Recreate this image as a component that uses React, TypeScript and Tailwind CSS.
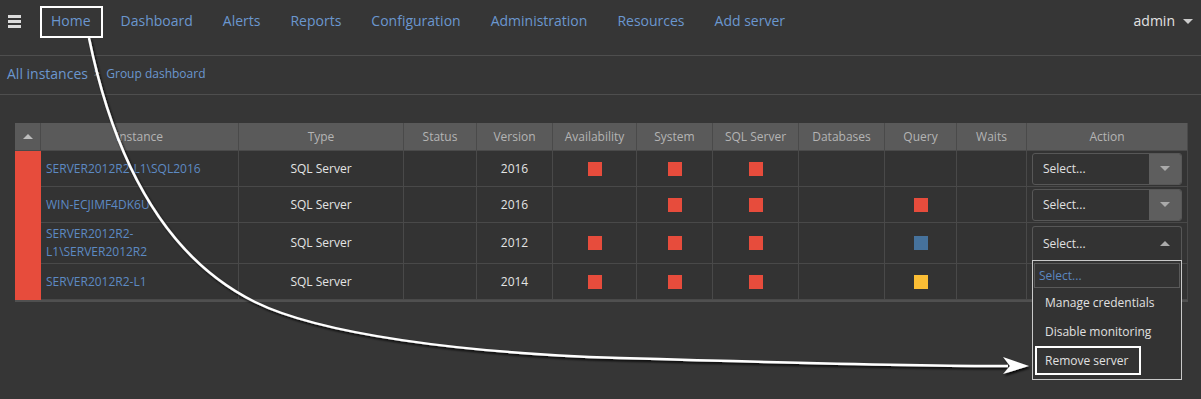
import React from "react";

const navLinks = ["Home", "Dashboard", "Alerts", "Reports", "Configuration", "Administration", "Resources", "Add server"];

const headers = ["Instance", "Type", "Status", "Version", "Availability", "System", "SQL Server", "Databases", "Query", "Waits", "Action"];

type Row = {
  name: React.ReactNode;
  version: string;
  avail: string | null;
  system: string | null;
  sql: string | null;
  query: string | null;
  open?: boolean;
};

const RED = "bg-[#e74c3c]";
const BLUE = "bg-[#46729c]";
const YELLOW = "bg-[#fbbe35]";

const rows: Row[] = [
  { name: "SERVER2012R2-L1\\SQL2016", version: "2016", avail: RED, system: RED, sql: RED, query: null },
  { name: "WIN-ECJIMF4DK6U", version: "2016", avail: null, system: RED, sql: RED, query: RED },
  {
    name: (
      <>
        SERVER2012R2-
        <br />
        L1\SERVER2012R2
      </>
    ),
    version: "2012",
    avail: RED,
    system: RED,
    sql: RED,
    query: BLUE,
    open: true,
  },
  { name: "SERVER2012R2-L1", version: "2014", avail: RED, system: RED, sql: RED, query: YELLOW },
];

const cell = "border-r border-b border-[#494949] bg-[#333333]";

function Square({ c }: { c: string | null }) {
  return (
    <div className={`${cell} flex items-center justify-center`}>
      {c ? <div className={`w-[14px] h-[14px] ${c}`} /> : null}
    </div>
  );
}

function ClosedSelect() {
  return (
    <div className={`${cell} flex items-center px-[5px]`}>
      <div className="flex h-[32px] w-[150px] overflow-hidden rounded-[3px] border border-[#575757] bg-[#333333]">
        <span className="flex flex-1 items-center pl-[10px] text-[12px] text-[#e0e0e0]">Select...</span>
        <span className="flex w-[32px] items-center justify-center bg-[#5e5e5e]">
          <span className="h-0 w-0 border-l-[5px] border-r-[5px] border-t-[5px] border-l-transparent border-r-transparent border-t-[#aaaaaa]" />
        </span>
      </div>
    </div>
  );
}

function OpenSelect() {
  return (
    <div className={`${cell} relative flex items-start px-[5px] pt-[3px]`}>
      <div className="relative w-[150px]">
        <div className="flex h-[34px] w-[150px] rounded-t-[3px] border border-b-0 border-[#575757] bg-[#333333]">
          <span className="flex flex-1 items-center pl-[10px] text-[12px] text-[#e0e0e0]">Select...</span>
          <span className="flex w-[32px] items-center justify-center">
            <span className="h-0 w-0 border-l-[5px] border-r-[5px] border-b-[5px] border-l-transparent border-r-transparent border-b-[#aaaaaa]" />
          </span>
        </div>
        <div className="absolute left-0 top-full z-10 h-[120px] w-[150px] border border-[#c9c9c9] bg-[#333333]">
          <div className="mx-[1px] mt-[2px] flex h-[25px] items-center border border-[#5a5a5a] pl-[4px] text-[12px] text-[#5b87c0]">
            Select...
          </div>
          <div className="flex h-[29px] items-center pl-[12px] text-[12px] text-[#e0e0e0]">Manage credentials</div>
          <div className="flex h-[29px] items-center pl-[12px] text-[12px] text-[#e0e0e0]">Disable monitoring</div>
          <div className="flex h-[29px] items-center px-[2px]">
            <div className="flex h-[29px] w-[106px] items-center border-2 border-white pl-[8px] text-[12px] text-[#e0e0e0]">
              Remove server
            </div>
          </div>
        </div>
      </div>
    </div>
  );
}

export default function App() {
  return (
    <div className="relative h-[399px] w-[1201px] overflow-hidden bg-[#363636] font-['Open_Sans',sans-serif]">
      {/* Top nav */}
      <nav className="flex h-[56px] items-start border-b border-[#4e4e4e] pt-[11px]">
        <div className="ml-[8px] mt-[4px] flex w-[13px] flex-col gap-[2px]">
          <span className="h-[3px] bg-[#dcdcdc]" />
          <span className="h-[3px] bg-[#dcdcdc]" />
          <span className="h-[3px] bg-[#dcdcdc]" />
        </div>
        <div className="ml-[15px] flex">
          {navLinks.map((l) => (
            <span key={l} className="px-[15px] text-[14px] leading-[20px] text-[#6b97cf]">
              {l}
            </span>
          ))}
        </div>
        <div className="ml-auto mr-[8px] flex items-center gap-[8px]">
          <span className="text-[14px] leading-[20px] text-[#e2e2e2]">admin</span>
          <span className="h-0 w-0 border-l-[5px] border-r-[5px] border-t-[5px] border-l-transparent border-r-transparent border-t-[#cccccc]" />
        </div>
      </nav>

      {/* Breadcrumb */}
      <div className="flex h-[39px] items-center border-b border-[#4e4e4e] pb-[3px] pl-[7px]">
        <span className="text-[14px] text-[#6b97cf]">All instances</span>
        <span className="ml-[6px] text-[11px] text-[#aaaaaa]">&gt;</span>
        <span className="ml-[6px] text-[12px] text-[#6b97cf]">Group dashboard</span>
      </div>

      {/* Table */}
      <div className="px-[15px] pt-[28px]">
        <div className="grid w-[1173px] grid-cols-[26px_198px_165px_73px_76px_84px_76px_86px_86px_72px_70px_161px] grid-rows-[28px_36px_36px_41px_36px] border-b-2 border-[#505050] text-[12px]">
          <div className="flex items-center justify-center border-r border-b border-[#4a4a4a] bg-[#5a5a5a]">
            <span className="h-0 w-0 border-l-[5px] border-r-[5px] border-b-[5px] border-l-transparent border-r-transparent border-b-[#bdbdbd]" />
          </div>
          {headers.map((h) => (
            <div
              key={h}
              className="flex items-center justify-center border-r border-b border-[#4a4a4a] bg-[#5a5a5a] text-[#b4b4b4]"
            >
              {h}
            </div>
          ))}
          <div className="row-span-4 bg-[#e74c3c]" />
          {rows.map((r, i) => (
            <React.Fragment key={i}>
              <div className={`${cell} flex items-center pl-[5px] leading-[18px] text-[#5d8ac3]`}>{r.name}</div>
              <div className={`${cell} flex items-center justify-center text-[#e4e4e4]`}>SQL Server</div>
              <div className={cell} />
              <div className={`${cell} flex items-center justify-center text-[#e4e4e4]`}>{r.version}</div>
              <Square c={r.avail} />
              <Square c={r.system} />
              <Square c={r.sql} />
              <div className={cell} />
              <Square c={r.query} />
              <div className={cell} />
              {r.open ? <OpenSelect /> : <ClosedSelect />}
            </React.Fragment>
          ))}
        </div>
      </div>

      {/* Annotation overlay */}
      <svg className="pointer-events-none absolute left-0 top-0 z-20" width="1201" height="399" viewBox="0 0 1201 399">
        <defs>
          <filter id="sh" x="-10%" y="-10%" width="120%" height="120%">
            <feDropShadow dx="1.5" dy="2" stdDeviation="1" floodColor="#000" floodOpacity="0.85" />
          </filter>
        </defs>
        <rect x="41" y="7" width="61" height="30" fill="none" stroke="#ffffff" strokeWidth="2" />
        <g filter="url(#sh)">
          <path
            d="M89 38 C 112 150 160 255 255 302 C 320 334 460 353 620 358 C 760 362 900 366 1008 366"
            fill="none"
            stroke="#ffffff"
            strokeWidth="2.5"
          />
          <path d="M1029 366 L1003 357 L1010 366 L1003 374 Z" fill="#ffffff" />
        </g>
      </svg>
    </div>
  );
}
